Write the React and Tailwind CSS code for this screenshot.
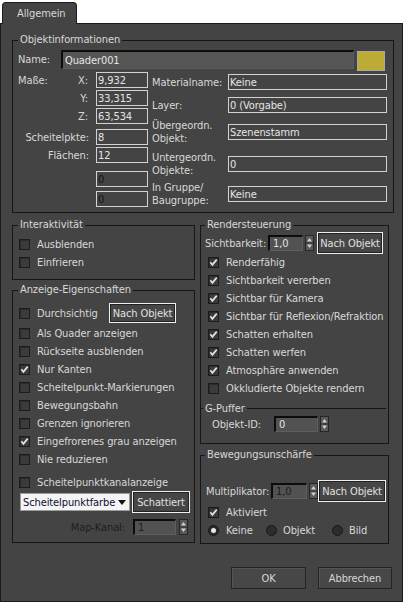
import React from "react";

const Check = ({ checked }) => (
  <div className="w-[11px] h-[11px] shrink-0 border border-[#1c1c1c] bg-[#3b3b3b] shadow-[inset_1px_1px_0_#2c2c2c] flex items-center justify-center">
    {checked && (
      <svg width="9" height="9" viewBox="0 0 9 9">
        <path d="M1.3 4.3 L3.4 6.8 L7.7 1.6" fill="none" stroke="#e4e4e4" strokeWidth="1.7" />
      </svg>
    )}
  </div>
);

const CheckRow = ({ checked, label, className = "" }) => (
  <div className={`flex items-center h-[18px] gap-[7px] ${className}`}>
    <Check checked={checked} />
    <span className="whitespace-nowrap">{label}</span>
  </div>
);

const Radio = ({ on }) => (
  <div className="w-[11px] h-[11px] shrink-0 rounded-full bg-[#2c2c2c] border border-[#181818] flex items-center justify-center">
    {on && <div className="w-[5px] h-[5px] rounded-full bg-[#e8e8e8]" />}
  </div>
);

const Arrows = () => (
  <svg width="9" height="16" viewBox="0 0 9 16" className="shrink-0">
    <rect x="0.5" y="0.5" width="8" height="15" fill="#5a5a5a" stroke="#262626" />
    <line x1="1" y1="8" x2="8" y2="8" stroke="#2a2a2a" />
    <path d="M2 6.5 L4.5 3 L7 6.5Z" fill="#cfcfcf" />
    <path d="M2 9.5 L4.5 13 L7 9.5Z" fill="#cfcfcf" />
  </svg>
);

const Sunken = ({ w, children, dim }) => (
  <div
    className={`${w} h-[16px] shrink-0 bg-[#525252] border-t-2 border-l-2 border-t-[#0c0c0c] border-l-[#0c0c0c] border-r border-b border-r-[#5e5e5e] border-b-[#5e5e5e] pl-[3px] flex items-center ${dim ? "text-[#1c1c1c]" : "text-[#e2e2e2]"}`}
  >
    {children}
  </div>
);

const Framed = ({ w, children, dim }) => (
  <div
    className={`${w} h-[16px] shrink-0 border border-[#d2d2d2] bg-[#444444] pl-[1px] flex items-center ${dim ? "text-[#151515]" : "text-[#e4e4e4]"}`}
  >
    {children}
  </div>
);

const Btn = ({ w, h = "h-[22px]", children }) => (
  <div className={`${w} ${h} shrink-0 border border-[#efefef] bg-[#464646] shadow-[inset_0_0_0_1px_#222] flex items-center justify-center text-[#e0e0e0] whitespace-nowrap`}>
    {children}
  </div>
);

export default function App() {
  return (
    <div className="w-[403px] h-[602px] bg-white text-[11px] leading-[13px] tracking-[-0.1px] text-[#d8d8d8] font-['DejaVu_Sans_Condensed','Liberation_Sans',sans-serif]">
      {/* tab row */}
      <div className="h-[23px] flex items-end pl-[2px] bg-white">
        <div className="relative z-10 -mb-px w-[75px] h-[22px] bg-[#444444] border border-b-0 border-[#1e1e1e] rounded-t-[4px] pl-[14px] pt-[4px]">
          Allgemein
        </div>
      </div>

      {/* panel */}
      <div className="w-[403px] h-[579px] bg-[#444444] border border-[#1a1a1a] pl-[11px]">
        {/* Objektinformationen */}
        <fieldset className="mt-[9px] w-[382px] border border-[#161616] pb-[5px]">
          <legend className="ml-[5px] px-[2px] leading-[14px]">Objektinformationen</legend>
          <div className="mt-[3px] flex items-start pl-[5px]">
            <div className="w-[43px] h-[19px] flex items-center">Name:</div>
            <div className="w-[293px] h-[19px] bg-[#555555] border-t-2 border-l-2 border-t-[#0c0c0c] border-l-[#0c0c0c] border-r border-b border-r-[#5c5c5c] border-b-[#5c5c5c] pl-[2px] flex items-center text-[#e6e6e6]">
              Quader001
            </div>
            <div className="ml-[3px] mt-[1px] w-[28px] h-[20px] bg-[#bcab34] border border-[#a8a8a8]" />
          </div>

          <div className="mt-[1px] flex pl-[5px]">
            {/* column A */}
            <div className="w-[130px]">
              <div className="flex items-center h-[16px]">
                <span className="flex-1">Maße:</span>
                <span className="mr-[8px]">X:</span>
                <Framed w="w-[52px]">9,932</Framed>
              </div>
              <div className="flex items-center justify-end h-[16px] mt-[2px]">
                <span className="mr-[8px]">Y:</span>
                <Framed w="w-[52px]">33,315</Framed>
              </div>
              <div className="flex items-center justify-end h-[16px] mt-[2px]">
                <span className="mr-[8px]">Z:</span>
                <Framed w="w-[52px]">63,534</Framed>
              </div>
              <div className="flex items-center justify-end h-[16px] mt-[5px]">
                <span className="mr-[7px]">Scheitelpkte:</span>
                <Framed w="w-[52px]">8</Framed>
              </div>
              <div className="flex items-center justify-end h-[16px] mt-[2px]">
                <span className="mr-[7px]">Flächen:</span>
                <Framed w="w-[52px]">12</Framed>
              </div>
              <div className="flex items-center justify-end h-[16px] mt-[8px]">
                <Framed w="w-[52px]" dim>0</Framed>
              </div>
              <div className="flex items-center justify-end h-[16px] mt-[4px]">
                <Framed w="w-[52px]" dim>0</Framed>
              </div>
            </div>

            {/* column B */}
            <div className="ml-[4px] w-[235px]">
              <div className="flex items-center h-[16px] mt-[2px]">
                <span className="w-[76px] whitespace-nowrap">Materialname:</span>
                <Framed w="w-[159px]">Keine</Framed>
              </div>
              <div className="flex items-center h-[16px] mt-[7px]">
                <span className="w-[76px]">Layer:</span>
                <Framed w="w-[159px]">0 (Vorgabe)</Framed>
              </div>
              <div className="flex items-center h-[26px] mt-[6px]">
                <span className="w-[76px]">Übergeordn.<br />Objekt:</span>
                <Framed w="w-[159px]">Szenenstamm</Framed>
              </div>
              <div className="flex items-center h-[26px] mt-[6px]">
                <span className="w-[76px]">Untergeordn.<br />Objekte:</span>
                <Framed w="w-[159px]">0</Framed>
              </div>
              <div className="flex items-center h-[26px] mt-[4px]">
                <span className="w-[76px]">In Gruppe/<br />Baugruppe:</span>
                <Framed w="w-[159px]">Keine</Framed>
              </div>
            </div>
          </div>
        </fieldset>

        {/* two columns */}
        <div className="mt-[5px] flex gap-[5px]">
          {/* left */}
          <div className="w-[183px]">
            <fieldset className="border border-[#161616] pt-[3px] pb-[8px] pl-[6px]">
              <legend className="ml-[-1px] px-[2px] leading-[14px]">Interaktivität</legend>
              <CheckRow label="Ausblenden" />
              <CheckRow label="Einfrieren" />
            </fieldset>

            <fieldset className="mt-[3px] border border-[#161616] pb-[7px] pl-[6px]">
              <legend className="ml-[-1px] px-[2px] leading-[14px]">Anzeige-Eigenschaften</legend>
              <div className="mt-[6px] flex items-center h-[20px]">
                <CheckRow label="Durchsichtig" className="w-[90px]" />
                <Btn w="w-[67px]" h="h-[20px]">Nach Objekt</Btn>
              </div>
              <CheckRow label="Als Quader anzeigen" className="mt-[1px]" />
              <CheckRow label="Rückseite ausblenden" />
              <CheckRow label="Nur Kanten" checked />
              <CheckRow label="Scheitelpunkt-Markierungen" />
              <CheckRow label="Bewegungsbahn" />
              <CheckRow label="Grenzen ignorieren" />
              <CheckRow label="Eingefrorenes grau anzeigen" checked />
              <CheckRow label="Nie reduzieren" />
              <CheckRow label="Scheitelpunktkanalanzeige" className="mt-[5px]" />
              <div className="flex items-center h-[22px]">
                <div className="ml-[1px] w-[110px] h-[18px] bg-[#f4f4f4] border border-[#9c9c9c] flex items-center pl-[2px] pr-[3px] text-[#0d0d30] overflow-hidden">
                  <span className="flex-1 whitespace-nowrap overflow-hidden">Scheitelpunktfarbe</span>
                  <svg width="8" height="5" viewBox="0 0 8 5" className="shrink-0 ml-[2px]"><path d="M0 0 L8 0 L4 5Z" fill="#111" /></svg>
                </div>
                <Btn w="ml-[2px] w-[58px]">Schattiert</Btn>
              </div>
              <div className="mt-[6px] flex items-center h-[16px]">
                <span className="w-[106px] text-right text-[#1e1e1e]">Map-Kanal:</span>
                <Sunken w="ml-[8px] w-[43px]" dim>1</Sunken>
                <div className="ml-[3px]"><Arrows /></div>
              </div>
            </fieldset>
          </div>

          {/* right */}
          <div className="w-[189px]">
            <fieldset className="border border-[#161616] pb-[11px]">
              <legend className="ml-[4px] px-[2px] leading-[14px]">Rendersteuerung</legend>
              <div className="mt-[1px] flex items-center h-[20px] pl-[4px]">
                <span className="w-[63px]">Sichtbarkeit:</span>
                <Sunken w="w-[35px]">1,0</Sunken>
                <div className="ml-[2px]"><Arrows /></div>
                <Btn w="ml-[3px] w-[66px]">Nach Objekt</Btn>
              </div>
              <div className="pl-[7px]">
                <CheckRow label="Renderfähig" checked />
                <CheckRow label="Sichtbarkeit vererben" checked />
                <CheckRow label="Sichtbar für Kamera" checked />
                <CheckRow label="Sichtbar für Reflexion/Refraktion" checked />
                <CheckRow label="Schatten erhalten" checked />
                <CheckRow label="Schatten werfen" checked />
                <CheckRow label="Atmosphäre anwenden" checked />
                <CheckRow label="Okkludierte Objekte rendern" />
              </div>
              <div className="mt-[5px] flex items-center h-[13px] pr-[2px]">
                <div className="w-[2px] h-px bg-[#161616]" />
                <span className="px-[2px]">G-Puffer</span>
                <div className="flex-1 h-px bg-[#161616]" />
              </div>
              <div className="mt-[1px] flex items-center h-[16px] pl-[11px]">
                <span className="w-[62px]">Objekt-ID:</span>
                <Sunken w="w-[44px]">0</Sunken>
                <div className="ml-[2px]"><Arrows /></div>
              </div>
            </fieldset>

            <fieldset className="mt-[4px] border border-[#161616] pb-[4px]">
              <legend className="ml-[4px] px-[2px] leading-[14px]">Bewegungsunschärfe</legend>
              <div className="mt-[19px] flex items-center h-[20px] pl-[5px]">
                <span className="w-[65px]">Multiplikator:</span>
                <Sunken w="w-[36px]" dim>1,0</Sunken>
                <div className="ml-[2px]"><Arrows /></div>
                <Btn w="w-[68px]">Nach Objekt</Btn>
              </div>
              <CheckRow label="Aktiviert" checked className="mt-[2px] pl-[7px]" />
              <div className="flex items-center h-[18px] pl-[7px]">
                <div className="w-[58px] flex items-center gap-[7px]"><Radio on /><span>Keine</span></div>
                <div className="w-[66px] flex items-center gap-[6px]"><Radio /><span>Objekt</span></div>
                <div className="flex items-center gap-[6px]"><Radio /><span>Bild</span></div>
              </div>
            </fieldset>
          </div>
        </div>

        {/* bottom buttons */}
        <div className="mt-[23px] flex justify-end gap-[12px] pr-[10px]">
          <div className="w-[75px] h-[22px] bg-[#474747] border border-[#242424] shadow-[inset_1px_1px_0_#555] flex items-center justify-center">OK</div>
          <div className="w-[74px] h-[22px] bg-[#474747] border border-[#242424] shadow-[inset_1px_1px_0_#555] flex items-center justify-center">Abbrechen</div>
        </div>
      </div>
    </div>
  );
}
